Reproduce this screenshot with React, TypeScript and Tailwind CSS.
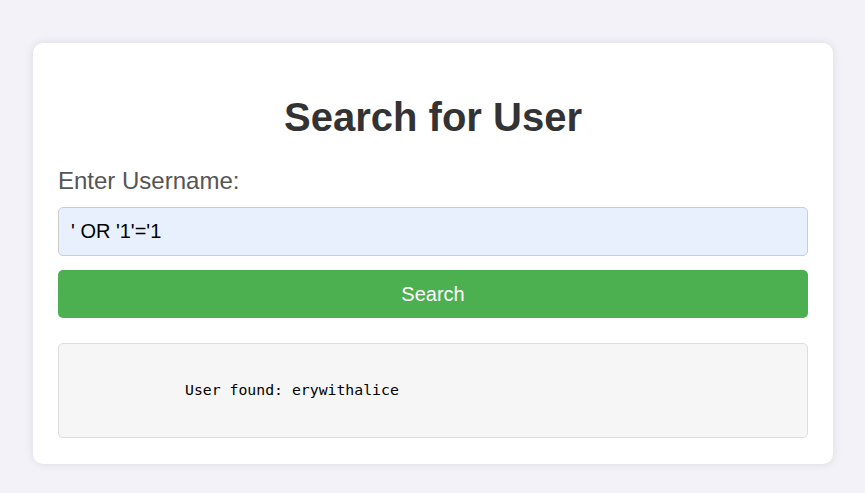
export default function App() {
  return (
    <div className="min-h-screen bg-[#f3f2f8] pt-[43px] px-[33px] font-['Liberation_Sans',Arial,sans-serif]">
      <div className="w-[800px] rounded-[10px] bg-white px-[25px] pt-[28px] pb-[26px] shadow-[0_0_10px_rgba(0,0,0,0.1)]">
        <h1 className="mt-[23px] mb-[27px] text-center text-[40px] leading-[46px] font-bold text-[#333]">
          Search for User
        </h1>
        <label className="block text-[24px] leading-[28px] text-[#555]">Enter Username:</label>
        <input
          type="text"
          defaultValue="' OR '1'='1"
          className="mt-[12px] block h-[49px] w-full rounded-[5px] border border-[#ccc] bg-[#e8f0fe] px-[12px] text-[20px] text-black outline-none"
        />
        <button className="mt-[14px] block h-[48px] w-full rounded-[5px] bg-[#4caf50] text-[20px] text-white">
          Search
        </button>
        <div className="mt-[25px] flex h-[95px] items-center rounded-[5px] border border-[#ddd] bg-[#f6f6f6] pl-[126px]">
          <pre className="font-['DejaVu_Sans_Mono',monospace] text-[14.8px] text-black">User found: erywithalice</pre>
        </div>
      </div>
    </div>
  );
}
